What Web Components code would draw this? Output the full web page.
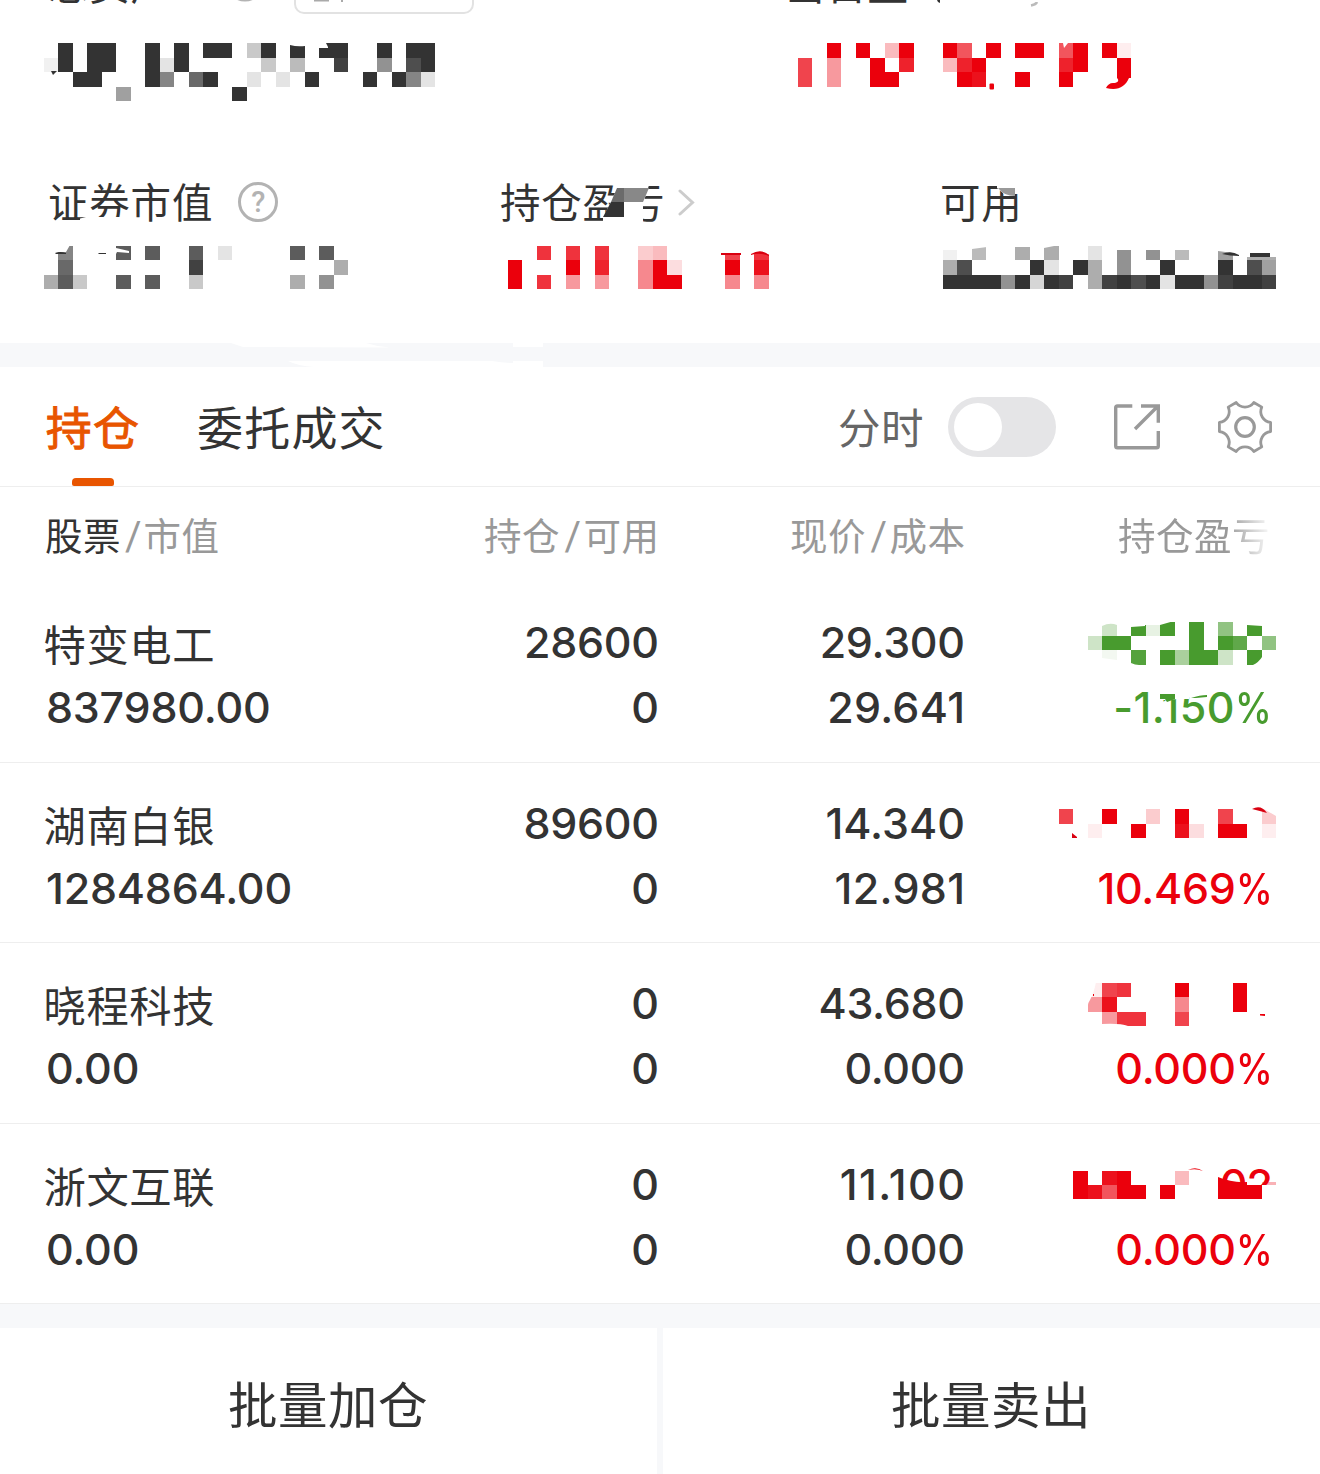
<!DOCTYPE html>
<html lang="zh-CN">
<head>
<meta charset="utf-8">
<title>持仓</title>
<style>
body{margin:0;width:1320px;height:1474px;overflow:hidden;background:#fff;color:#333;font-family:"Noto Sans CJK SC","Noto Sans",sans-serif}
</style>
</head>
<body>
<holdings-page></holdings-page>
<script>
const RED='#eb000c',GREEN='#489b2e',DARK='#333';
/* Privacy mosaics. Each row string holds one hex digit of opacity per block. */
const MOSAICS={
 total:{k:3,ys:[43,58,72,87,101],c:DARK,rows:['.f.ff..f.f.ff.4f.f.ff..f.ff','1f.ff..f2f.....4.5..e..8.df','..ff...f9.bf..2.2.f...f.f92','.....7.......f'],
  extra:'<path d="M51 71H57L53 75Z" fill="#333"/><path d="M319 48H328V47L326 43H319ZM290 42V45Q297 47 305 46V42Z" fill="#fff"/>'},
 today:{k:55,ys:[43,58,72,87],c:RED,rows:['..f.f.4f..fa.f.ff.af.f1','b.6..f.d..4df.....df..f','b.6..ff....fe..f..f'],
  extra:'<rect x="989.5" y="83.5" width="4.500" height="6" rx="1"/><path d="M1117 72H1131V78H1129C1125 87 1118 91 1106 88C1107 85 1110 83 1113 83C1117 83 1120 81 1117 78Z"/><path d="M1063 43H1068L1064 48Z" fill="#fff"/>'},
 market:{k:3,ys:[246,260,275,289],c:DARK,rows:['.9...c.c..c.2....c.c','.b........e.........6','6c4..c.c..4......6.8'],
  extra:'<path d="M57 245H70L66 252H57ZM116 245V248L129 251V253L117 252L116 254H114V245Z" fill="#fff"/><path d="M55 253Q60 251 66 253V254H56ZM98 253H106V254H99Z" fill="#333"/>'},
 profit:{k:35,ys:[246,260,275,289],c:RED,rows:['..c.c.c..34....b.c','f...f.d..7f2...f.e','f.c.6.6..7ff...7.7'],
  extra:'<path d="M720 245H742V255H720ZM753 245H770V255L762 252L753 254Z" fill="#fff"/><path d="M721 253H741V255H721ZM751 254Q761 248 769 255V256Q760 252 751 255Z" fill="#d90010"/>'},
 usable:{k:65,ys:[246,260,275,289],c:DARK,rows:['1.5..6.6..2.8.8.5..7.66','6d....f2.f6.8..f...f.d7','ffff8f3fe.6efdf2ff8effe'],
  extra:'<path d="M942 245H958V250H942ZM972 245H987V247L972 249ZM1015 245H1030V247H1015ZM1044 245H1059L1044 248ZM1117 245H1132V250H1117ZM1146 245H1161V250H1146ZM1175 245H1190V250H1175ZM1218 245H1233V253L1218 251ZM1247 245H1276V257H1247Z" fill="#fff"/><path d="M1222 254Q1231 250 1239 255V256Q1230 256 1222 254ZM1250 253H1270V257H1250Z" fill="#333"/>'},
 p1:{k:75,ys:[622,636,650,665],c:GREEN,rows:['.4.f2f.f.9.f','4ff....f.fd.9','.1.e.f7ff4.f'],
  extra:'<path d="M1102 621H1117V625Q1110 622 1102 626ZM1131 621H1160V625H1145V626L1131 627ZM1160 621H1174L1160 625ZM1247 621H1262V626L1247 625ZM1102 658L1117 660V665H1102ZM1131 663Q1135 665 1139 665V666H1131ZM1262 657Q1259 662 1253 665V666H1262Z" fill="#fff"/>'},
 p2:{k:73,ys:[809,824,838],c:RED,rows:['b..f..3.f..b..3','..1..f..e2.ff.1'],
  extra:'<path d="M1072 833L1077 837V838H1072Z" fill="#d90010"/><path d="M1262 808L1276 816V808Z" fill="#fff"/><path d="M1252 809Q1261 804 1267 813Q1260 811 1252 809Z" fill="#d90010"/>'},
 p3:{k:75,ys:[983,997,1012,1026],c:RED,rows:['1bc...f...f','6e....7...f','.6cc..b'],
  extra:'<path d="M1088 982H1096Q1094 993 1090 1000Q1088 1003 1088 1005ZM1102 1024Q1120 1023 1128 1026H1102Z" fill="#fff"/><path d="M1260 1014L1265 1014V1016L1260 1015.500Z"/><path d="M1093 994H1094V996H1093Z"/>'},
 p4:{k:74,ys:[1171,1185,1199],c:RED,rows:['f.ef...4','feaff.f...fff'],
  extra:'<path d="M1218 1177Q1232 1183 1247 1182V1186H1218Z"/><path d="M1262 1182H1276V1185H1262Z" opacity=".3"/><path d="M1188 1170Q1196 1166 1203 1171Q1196 1168 1188 1170Z"/>'}
};
const define=(tag,html,css)=>customElements.define(tag,class extends HTMLElement{
 connectedCallback(){
  if(this.shadowRoot)return;
  const s=this.attachShadow({mode:'open'});
  s.innerHTML='<style>:host{display:block;box-sizing:border-box}*{box-sizing:border-box}'+css+'</style>'+(typeof html==='function'?html(this):html);
 }});

define('pixel-mosaic',el=>{
 const m=MOSAICS[el.getAttribute('name')],X=n=>Math.round(14.5*n);
 const cols=Math.max(...m.rows.map(r=>r.length)),x0=X(m.k),y0=m.ys[0],w=X(m.k+cols)-x0,h=m.ys.at(-1)-y0;
 let r='';
 m.rows.forEach((row,j)=>[...row].forEach((ch,i)=>{
  if(ch==='.')return;
  const a=X(m.k+i),b=X(m.k+i+1);
  r+=`<rect x="${a}" y="${m.ys[j]}" width="${b-a}" height="${m.ys[j+1]-m.ys[j]}" opacity="${(parseInt(ch,16)/15).toFixed(3)}" shape-rendering="crispEdges"/>`;
 }));
 return `<svg width="${w}" height="${h}" viewBox="${x0} ${y0} ${w} ${h}" fill="${m.c}">${r}${m.extra}</svg>`;
},':host{flex:none}svg{display:block;overflow:visible}');

define('help-icon','<span>?</span>',':host{width:40px;height:40px;border:3px solid #b3b3b3;border-radius:50%;display:flex;align-items:center;justify-content:center;color:#b3b3b3;font:500 29px/34px Roboto,sans-serif;flex:none}');

define('account-summary',`
 <div class="top">
  <div class="total"><span class="label">总资产</span><svg class="eye" width="40" height="40"><circle cx="20" cy="20" r="18" fill="none" stroke="#b3b3b3" stroke-width="3"/></svg><div class="pick"><svg width="60" height="4"><path d="M0 0H15V1.500H0ZM27 0H29V2H27Z" fill="#aaa"/></svg></div></div>
  <div class="day"><span class="label">当日盈亏</span><svg width="12" height="6"><path d="M1 3.500Q6 2.500 7 0" fill="none" stroke="#bbb" stroke-width="2.500"/></svg><svg class="mask" width="46" height="10"><path d="M0 0H46V10H0Z" fill="#fff"/><path d="M27 0H30V3L28 2Z" fill="#333"/></svg></div>
 </div>
 <div class="big"><pixel-mosaic name="total"></pixel-mosaic><pixel-mosaic name="today"></pixel-mosaic></div>
 <div class="stats">
  <div class="s1"><div class="line"><span class="label">证券市值</span><help-icon></help-icon></div><pixel-mosaic name="market"></pixel-mosaic><svg class="cover" width="260" height="60" viewBox="40 175 260 60"><path d="M80 218.500L90 216V224H80ZM91 217H132V226H91Z" fill="#fff"/></svg></div>
  <div class="s2"><div class="line"><span class="label">持仓盈亏</span><svg width="18" height="28"><path d="M2 3L14.500 14.500L2 26" fill="none" stroke="#ccc" stroke-width="3" stroke-linecap="round"/></svg></div><pixel-mosaic name="profit"></pixel-mosaic><svg class="cover" width="260" height="60" viewBox="501 175 260 60"><path d="M615 182H650L643 204V225H603V218L615 193Z" fill="#fff"/><path d="M617 188H624V202H611Z" fill="#6b6b6b"/><path d="M624 188H649L643 202H624Z" fill="#888"/><path d="M611 202H624V217H603Z" fill="#333"/></svg></div>
  <div class="s3"><div class="line"><span class="label">可用</span></div><pixel-mosaic name="usable"></pixel-mosaic><svg class="cover" width="260" height="60" viewBox="942 175 260 60"><path d="M997 182H1024V194H1004L997 188Z" fill="#fff"/><path d="M998 188H1015V196Q1004 196 998 188Z" fill="#999"/></svg></div>
 </div>`,
 `:host{height:343px;overflow:hidden;padding-top:1px}
 .label{font-size:40.5px;line-height:41px;letter-spacing:.8px;white-space:nowrap;flex:none}
 .top{display:flex;height:41px;margin-top:-38px;padding-left:48px}
 .top .label{position:relative;top:-1px}
 .total{display:flex;width:737px;align-items:flex-start}.eye{margin:-1px 0 0 53px}
 .pick{width:180px;height:51px;border:2px solid #e2e2e2;border-radius:10px;margin-left:29px;flex:none;padding:35px 0 0 18px}
 .pick svg{display:block}
 .day{display:flex;align-items:flex-end;position:relative}.day svg{margin:0 0 -4px 80px}
 .day .mask{position:absolute;left:125px;top:37px;margin:0}
 .big{display:flex;height:58px;margin-top:39px;padding-left:44px;gap:363px}
 .stats{display:flex;margin-top:78px;height:110px}
 .stats>div{position:relative;flex:none}.s1{width:464px;padding-left:44px}.s2{width:479px;padding-left:44px}.s3{padding-left:0}
 .line{height:46px;display:flex;align-items:center;margin-bottom:21px}
 .line .label{margin-top:-3px}
 .s1 .line{padding-left:4px;gap:25px}.s2 .line{margin-left:-8px;gap:13px}.s3 .line{margin-left:-3px}
 .cover{position:absolute;top:-4px;left:40px}.s2 .cover{left:37px}.s3 .cover{left:-1px}`);

define('section-gap',el=>el.hasAttribute('torn')?'<svg width="1320" height="24" viewBox="0 343 1320 24"><path d="M231 343H366Q378 347 390 347.500L243 347ZM513 343H543V347H513ZM288 361H492Q503 363 513 363V361H543V367H314Q298 366 288 361Z" fill="#fff"/></svg>':'',':host{height:24px;background:#f7f8fa}svg{display:block}');

define('toggle-switch','<i></i>',':host{width:108px;height:60px;border-radius:30px;background:#e5e5e7;padding:6px;flex:none}i{display:block;width:48px;height:48px;border-radius:50%;background:#fff}');

define('share-icon','<svg width="48" height="48" viewBox="1113 403 48 48" fill="none" stroke="#999" stroke-width="3.400"><path d="M1132.300 406H1117.500Q1115.700 406 1115.700 407.800V446Q1115.700 447.800 1117.500 447.800H1156.500Q1158.300 447.800 1158.300 446V431M1141 406H1158.300V422.700M1158 406L1135 429"/></svg>','svg{display:block}');

define('gear-icon',()=>{
 const p=[];
 for(let i=0;i<6;i++){const a=i*Math.PI/3,f=(x,y)=>(x*Math.cos(a)-y*Math.sin(a)).toFixed(2)+' '+(x*Math.sin(a)+y*Math.cos(a)).toFixed(2);
  p.push((i?'A10.800 10.800 0 0 0 ':'M')+f(25.6,-4.6)+'L'+f(25.6,4.6));}
 return `<svg width="56" height="56" viewBox="-28 -28 56 56" fill="none" stroke="#999" stroke-width="2.800" stroke-linejoin="round"><path d="${p.join('')}A10.800 10.800 0 0 0 25.600 -4.600Z"/><circle r="9.300" stroke-width="3.200"/></svg>`;
},'svg{display:block}');

define('tab-bar',`<div class="tab on"><span>持仓</span><i></i></div><div class="tab">委托成交</div><div class="tools"><span>分时</span><toggle-switch></toggle-switch><share-icon></share-icon><gear-icon></gear-icon></div>`,
 `:host{height:120px;display:flex;padding-left:45px;border-bottom:1px solid #eee}
 .tab{font-size:46px;line-height:116px;letter-spacing:1.2px;height:119px;margin-right:57px;white-space:nowrap}
 .on{color:#e85500;width:95px;display:flex;flex-direction:column;align-items:center;-webkit-text-stroke:.9px #e85500}
 .on span{height:111px;margin-left:1px}.on i{width:42px;height:8px;border-radius:4px 4px 2px 2px;background:#e85500}
 .tools{margin-left:auto;display:flex;align-items:center;height:120px;padding-right:47px}
 .tools span{font-size:42.5px;line-height:60px;letter-spacing:.5px;color:#666;margin-right:24px;margin-top:-2px}
 share-icon{margin-left:57px}gear-icon{margin-left:56px}`);

define('table-head',`<div class="a"><b>股票</b><i>/</i>市值</div><div class="b">持仓<i>/</i>可用</div><div class="c">现价<i>/</i>成本</div><div class="d">持仓盈亏</div>`,
 `:host{height:95px;display:grid;grid-template-columns:400px 214.500px 306px 1fr;padding:0 44px 0 45px;font-size:37.5px;line-height:93px;letter-spacing:.5px;color:#999;text-align:right;white-space:nowrap}
 .a{text-align:left}b{font-weight:400;color:#333}i{font:40px/60px Roboto,sans-serif;display:inline-block;width:23.500px;text-align:center;letter-spacing:0;padding-left:2px}
 .a i{width:22.500px}
 .d{padding-right:6px;-webkit-mask-image:linear-gradient(to right,#000 0,#000 84%,transparent 99%)}`);

const num=t=>{
 const ones=(t.match(/1/g)||[]).length,ls=t.includes('11')?1.4:ones&&t.length<7?(t.startsWith('14')?0:.3):-.3;
 return `<span style="letter-spacing:${ls}px;margin-right:${-ls}px">${t}</span>`;
};
define('holding-row',el=>{
 const g=n=>el.getAttribute(n);
 return `<div class="name"><span class="cn">${g('name')}</span><span class="v">${g('value')}</span></div>
 <div class="n">${num(g('qty'))}${num('0')}</div><div class="n">${num(g('price'))}${num(g('cost'))}</div>
 <div class="pl"><div class="m" style="padding-top:${g('my')}px;padding-left:${g('mx')}px"><pixel-mosaic name="${g('m')}"></pixel-mosaic>${g('m')==='p4'?'<em>02</em>':''}</div><span class="pct">${g('pct').slice(0,-1)}<u>%</u></span>${g('m')==='p1'?'<svg width="120" height="40" viewBox="1150 688 120 40"><path d="M1158 688H1209V695L1193 697.500H1189V699H1178L1165 700H1158Z" fill="#fff"/><path d="M1160 694H1175V699L1167 702L1165 699H1160ZM1191 698Q1200 695 1207 695V697L1196 698Z" fill="#489b2e"/></svg>':''}</div>`;
},`:host{display:grid;grid-template-columns:400px 217px 306px 1fr;padding:28px 44px 0;border-bottom:1px solid #eee;font:500 43px/65px Inter,sans-serif;text-align:right;white-space:nowrap;height:180px}
 :host([tall]){height:181px}
 span{display:block;height:65px}.name{text-align:left}.v{padding-left:2px;letter-spacing:-.2px}
 .n{padding-right:2px}
 .cn{font:42.3px/65px "Noto Sans CJK SC",sans-serif;letter-spacing:.6px;margin-left:-.5px}
 .pl{position:relative;color:#eb000c}:host([down]) .pl{color:#489b2e}.pct{padding-right:4px;letter-spacing:-.3px}
 :host([down]) .pct{letter-spacing:.4px}
 u{text-decoration:none;display:inline-block;transform:scaleX(.86);transform-origin:100% 50%;margin-left:-6px}
 .m{height:65px;position:relative}em{position:absolute;right:4px;top:0;height:33px;overflow:hidden;font-style:normal;letter-spacing:-1px}
 .pl>svg{position:absolute;top:78px;left:183px}`);

define('batch-actions','<button>批量加仓</button><button>批量卖出</button>',
 `:host{display:flex;gap:6px;height:146px;background:#f7f8fa}
 button{border:0;margin:0;background:#fff;width:657px;padding:3px 1px 0 0;font:49.500px/143px "Noto Sans CJK SC",sans-serif;letter-spacing:.5px;color:#333}`);

define('holdings-page',`<account-summary></account-summary><section-gap torn></section-gap><tab-bar></tab-bar><table-head></table-head>
 <holding-row tall down name="特变电工" value="837980.00" qty="28600" price="29.300" cost="29.641" pct="-1.150%" m="p1" my="12" mx="121"></holding-row>
 <holding-row name="湖南白银" value="1284864.00" qty="89600" price="14.340" cost="12.981" pct="10.469%" m="p2" my="18" mx="92"></holding-row>
 <holding-row tall name="晓程科技" value="0.00" qty="0" price="43.680" cost="0.000" pct="0.000%" m="p3" my="12" mx="121"></holding-row>
 <holding-row name="浙文互联" value="0.00" qty="0" price="11.100" cost="0.000" pct="0.000%" m="p4" my="19" mx="106"></holding-row>
 <section-gap></section-gap><batch-actions></batch-actions>`,':host{width:1320px}');
</script>
</body>
</html>
